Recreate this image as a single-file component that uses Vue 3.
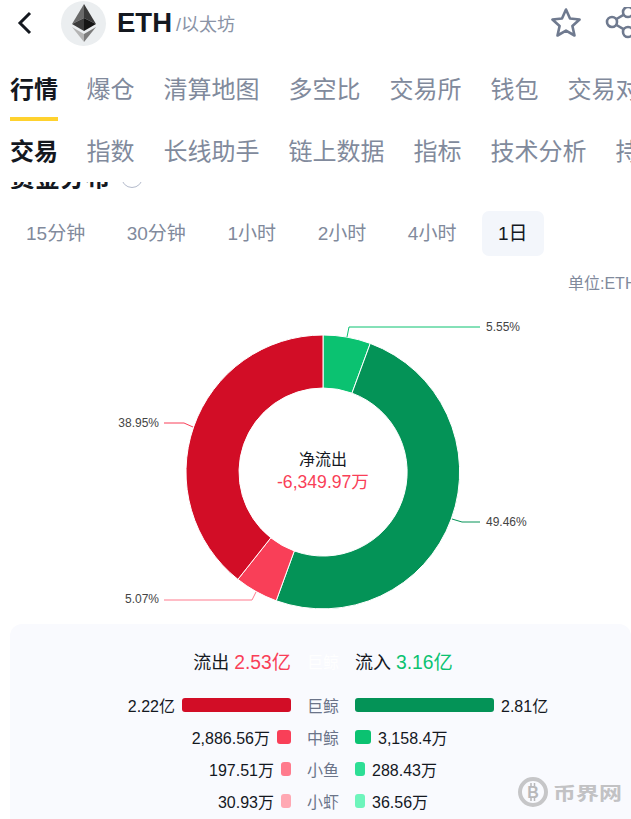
<script setup>
import { computed } from "vue";

const mainTabs = ["行情", "爆仓", "清算地图", "多空比", "交易所", "钱包", "交易对比"];
const subTabs = ["交易", "指数", "长线助手", "链上数据", "指标", "技术分析", "持仓"];
const periods = ["15分钟", "30分钟", "1小时", "2小时", "4小时", "1日"];

// Donut
const cx = 323;
const cy = 172;
const outerR = 137;
const innerR = 84;
const slices = [
  { pct: 5.55, color: "#0bc271" },
  { pct: 49.46, color: "#049357" },
  { pct: 5.07, color: "#f93f58" },
  { pct: 38.95, color: "#d20d26" },
];

const point = (r, deg) => {
  const a = (deg * Math.PI) / 180;
  return `${(cx + r * Math.sin(a)).toFixed(2)} ${(cy - r * Math.cos(a)).toFixed(2)}`;
};

const arcs = computed(() => {
  const total = slices.reduce((sum, s) => sum + s.pct, 0);
  let start = 0;
  return slices.map((s) => {
    const end = start + (s.pct / total) * 360;
    const large = end - start > 180 ? 1 : 0;
    const d = `M${point(outerR, start)}A${outerR} ${outerR} 0 ${large} 1 ${point(outerR, end)}L${point(innerR, end)}A${innerR} ${innerR} 0 ${large} 0 ${point(innerR, start)}Z`;
    start = end;
    return { d, color: s.color };
  });
});

const labels = [
  { text: "5.55%", x: 486, y: 31, anchor: "start", line: "347,37 349,27 480,27", color: "#0bc271" },
  { text: "49.46%", x: 486, y: 226, anchor: "start", line: "452,219 462,222 480,222", color: "#049357" },
  { text: "5.07%", x: 159, y: 303, anchor: "end", line: "256,292 252,300 164,300", color: "#ff7b8d" },
  { text: "38.95%", x: 159, y: 127, anchor: "end", line: "193,127 184,123 164,123", color: "#f93f58" },
];

// Flow rows, values in 万
const rows = [
  { name: "巨鲸", outText: "2.22亿", out: 22200, inText: "2.81亿", in: 28100, outColor: "#d20d26", inColor: "#049357" },
  { name: "中鲸", outText: "2,886.56万", out: 2886.56, inText: "3,158.4万", in: 3158.4, outColor: "#f93f58", inColor: "#0bc271" },
  { name: "小鱼", outText: "197.51万", out: 197.51, inText: "288.43万", in: 288.43, outColor: "#ff7b8d", inColor: "#2ede95" },
  { name: "小虾", outText: "30.93万", out: 30.93, inText: "36.56万", in: 36.56, outColor: "#ffa8b3", inColor: "#6ef5bc" },
];

const barWidth = (value) => Math.max(10, Math.round((value / 28100) * 138.5)) + "px";
</script>

<template>
  <div class="page">
    <div class="top">
      <div class="header">
        <svg class="back" width="15" height="24" viewBox="0 0 15 24">
          <path d="M13 2 3 12l10 10" fill="none" stroke="#14181f" stroke-width="3" />
        </svg>
        <div class="coin">
          <svg width="26" height="40" viewBox="0 0 26 40">
            <polygon points="13,1 1,21 13,15" fill="#6a6a6a" />
            <polygon points="13,1 25,21 13,15" fill="#3a3a3a" />
            <polygon points="1,21 13,15 13,28" fill="#3c3c3c" />
            <polygon points="25,21 13,15 13,28" fill="#151515" />
            <polygon points="1,24 13,31 13,39" fill="#b4b4b4" />
            <polygon points="25,24 13,31 13,39" fill="#7c7c7c" />
          </svg>
        </div>
        <span class="symbol">ETH</span>
        <span class="coin-name">/以太坊</span>
        <div class="actions">
          <svg width="32" height="32" viewBox="0 0 32 32">
            <path d="M16 2.500l4 9 9.600 1-7.200 6.500 2.100 9.500L16 23.600 7.500 28.500l2.100-9.500L2.400 12.500l9.600-1z" fill="none" stroke="#6f7a8f" stroke-width="2.600" stroke-linejoin="round" />
          </svg>
          <svg class="share" width="34" height="32" viewBox="0 0 34 32">
            <circle cx="7" cy="15" r="5" fill="none" stroke="#6f7a8f" stroke-width="2.600" />
            <circle cx="23" cy="5" r="5" fill="none" stroke="#6f7a8f" stroke-width="2.600" />
            <circle cx="23" cy="25" r="5" fill="none" stroke="#6f7a8f" stroke-width="2.600" />
            <path d="M11.500 12 18.500 7.800M11.500 18 18.500 22.200" stroke="#6f7a8f" stroke-width="2.600" />
          </svg>
        </div>
      </div>

      <div class="tabs main-tabs">
        <span v-for="(tab, i) in mainTabs" :key="tab" class="tab" :class="{ active: i === 0 }">{{ tab }}</span>
      </div>
      <div class="tabs sub-tabs">
        <span v-for="(tab, i) in subTabs" :key="tab" class="tab" :class="{ active: i === 0 }">{{ tab }}</span>
      </div>
    </div>

    <div class="title-clip">
      <div class="title-row">
        <span class="title">资金分布</span>
        <span class="help"></span>
      </div>
    </div>

    <div class="periods">
      <span v-for="(p, i) in periods" :key="p" class="period" :class="{ active: i === 5 }">{{ p }}</span>
    </div>

    <div class="unit">单位:ETH</div>

    <svg class="donut" width="631" height="324" viewBox="0 0 631 324">
      <path v-for="a in arcs" :key="a.color" :d="a.d" :fill="a.color" stroke="#fff" stroke-width="1" />
      <g v-for="l in labels" :key="l.text">
        <polyline :points="l.line" fill="none" :stroke="l.color" stroke-width="1" />
        <text :x="l.x" :y="l.y" :text-anchor="l.anchor" class="pct">{{ l.text }}</text>
      </g>
      <text :x="cx" y="165" text-anchor="middle" class="net-label">净流出</text>
      <text :x="cx" y="188" text-anchor="middle" class="net-value">-6,349.97万</text>
    </svg>

    <div class="panel">
      <div class="row summary">
        <div class="side left">
          <span>流出</span>
          <span class="amount red">2.53亿</span>
        </div>
        <span class="name ghost">巨鲸</span>
        <div class="side">
          <span>流入</span>
          <span class="amount green">3.16亿</span>
        </div>
      </div>
      <div v-for="r in rows" :key="r.name" class="row flow">
        <div class="side left">
          <span>{{ r.outText }}</span>
          <i class="bar" :style="{ width: barWidth(r.out), background: r.outColor }"></i>
        </div>
        <span class="name">{{ r.name }}</span>
        <div class="side">
          <i class="bar" :style="{ width: barWidth(r.in), background: r.inColor }"></i>
          <span>{{ r.inText }}</span>
        </div>
      </div>

      <div class="watermark">
        <svg width="30" height="30" viewBox="0 0 30 30">
          <circle cx="15" cy="15" r="13" fill="none" stroke="#c6c6c8" stroke-width="4" />
          <path d="M13 6v3M16.500 6v3M13 21v3M16.500 21v3" stroke="#b8b8ba" stroke-width="1.500" />
          <text x="15" y="20.500" text-anchor="middle" class="mark-b">B</text>
        </svg>
        <span class="mark-text">币界网</span>
      </div>
    </div>
  </div>
</template>

<style scoped>
.page {
  position: relative;
  width: 631px;
  height: 819px;
  overflow: hidden;
  background: #fff;
  color: #14181f;
  font-family: "Liberation Sans", "Noto Sans CJK SC", sans-serif;
}

.top {
  height: 182px;
  overflow: hidden;
}

.header {
  display: flex;
  align-items: center;
  height: 46px;
  padding-left: 17px;
}

.coin {
  display: flex;
  align-items: center;
  justify-content: center;
  width: 45px;
  height: 45px;
  margin-left: 29px;
  border-radius: 50%;
  background: #ebeef0;
}

.symbol {
  margin-left: 11px;
  font-size: 27.500px;
  font-weight: 700;
}

.coin-name {
  margin-left: 4px;
  font-size: 18px;
  color: #8a93a6;
}

.actions {
  display: flex;
  align-items: center;
  flex-shrink: 0;
  margin-left: auto;
  margin-right: -8px;
  gap: 23px;
}

.tabs {
  display: flex;
  gap: 29px;
  padding-left: 10px;
  white-space: nowrap;
}

.tab {
  flex-shrink: 0;
  font-size: 24px;
  color: #818a9c;
}

.tab.active {
  margin-right: -0.500px;
  font-weight: 700;
  color: #14181f;
}

.main-tabs {
  height: 75px;
  padding-top: 26px;
  box-sizing: border-box;
}

.main-tabs .tab {
  height: 49px;
  line-height: 35px;
  box-sizing: border-box;
}

.main-tabs .tab.active {
  border-bottom: 4px solid #ffd22e;
}

.sub-tabs {
  padding-top: 13px;
  line-height: 35px;
}

.title-clip {
  display: flex;
  align-items: flex-end;
  height: 7px;
  overflow: hidden;
}

.title-row {
  display: flex;
  align-items: center;
  flex-shrink: 0;
  height: 26px;
  padding-left: 10px;
}

.title {
  font-size: 25px;
  font-weight: 700;
}

.help {
  align-self: flex-end;
  width: 22px;
  height: 22px;
  margin-left: 11px;
  margin-bottom: 1px;
  border: 1.500px solid #b4bbcc;
  border-radius: 50%;
  box-sizing: border-box;
}

.periods {
  display: flex;
  align-items: center;
  margin-top: 22px;
  padding-left: 10px;
  gap: 9.600px;
}

.period {
  height: 45px;
  line-height: 45px;
  padding: 0 16px;
  border-radius: 7px;
  font-size: 19px;
  color: #818a9c;
}

.period.active {
  background: #f3f6fb;
  color: #14181f;
}

.unit {
  margin-top: 18px;
  padding-left: 568px;
  height: 20px;
  line-height: 20px;
  font-size: 16px;
  color: #818a9c;
  white-space: nowrap;
}

.donut {
  display: block;
  margin-top: 6px;
}

.pct {
  font-size: 12px;
  fill: #444;
}

.net-label {
  font-size: 16px;
  fill: #14181f;
}

.net-value {
  font-size: 17.600px;
  fill: #f93f58;
}

.panel {
  position: relative;
  height: 240px;
  margin-left: 10px;
  padding-top: 21px;
  border-radius: 12px;
  background: #f9fafe;
  box-sizing: border-box;
}

.row {
  display: grid;
  grid-template-columns: 281px 32px 1fr;
  column-gap: 16px;
  align-items: center;
}

.summary {
  height: 32px;
  margin-bottom: 12px;
  font-size: 18px;
}

.flow {
  height: 32px;
  font-size: 16px;
}

.side {
  display: flex;
  align-items: center;
  gap: 7px;
  white-space: nowrap;
}

.side.left {
  justify-content: flex-end;
}

.summary .side {
  gap: 5px;
}

.amount {
  font-size: 19.300px;
}

.name {
  font-size: 16px;
  color: #6b7489;
  white-space: nowrap;
}

.ghost {
  color: #fff;
}

.red {
  color: #f93f58;
}

.green {
  color: #0bc271;
}

.bar {
  display: block;
  height: 14px;
  border-radius: 3px;
}

.watermark {
  position: absolute;
  top: 151px;
  left: 508px;
  display: flex;
  align-items: center;
  gap: 5px;
  color: #c2c2c4;
  white-space: nowrap;
}

.mark-text {
  display: inline-block;
  font-size: 23px;
  font-weight: 700;
  transform: scaleY(0.8);
}

.mark-b {
  font-size: 16px;
  font-weight: 700;
  fill: #b8b8ba;
}
</style>
